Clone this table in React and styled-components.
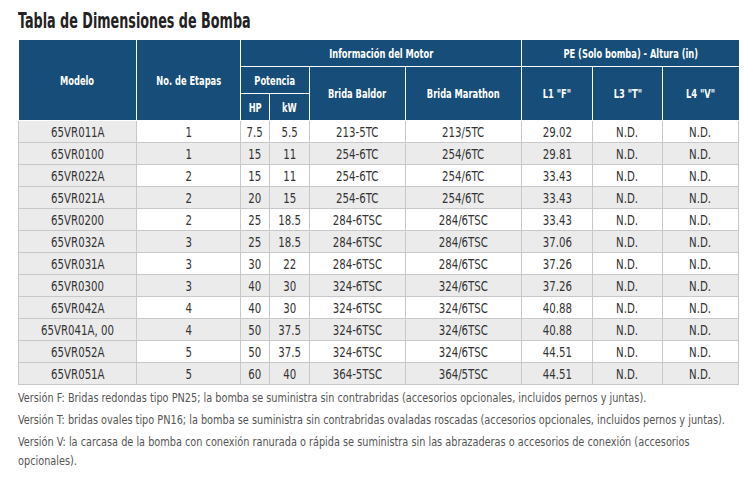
import React from 'react';
import styled, { createGlobalStyle } from 'styled-components';

const GlobalStyle = createGlobalStyle`
  html, body {
    margin: 0;
    padding: 0;
    background: #ffffff;
  }
  body {
    font-family: 'DejaVu Sans Condensed', 'DejaVu Sans', sans-serif;
  }
`;

const rows = [
  ['65VR011A', '1', '7.5', '5.5', '213-5TC', '213/5TC', '29.02', 'N.D.', 'N.D.'],
  ['65VR0100', '1', '15', '11', '254-6TC', '254/6TC', '29.81', 'N.D.', 'N.D.'],
  ['65VR022A', '2', '15', '11', '254-6TC', '254/6TC', '33.43', 'N.D.', 'N.D.'],
  ['65VR021A', '2', '20', '15', '254-6TC', '254/6TC', '33.43', 'N.D.', 'N.D.'],
  ['65VR0200', '2', '25', '18.5', '284-6TSC', '284/6TSC', '33.43', 'N.D.', 'N.D.'],
  ['65VR032A', '3', '25', '18.5', '284-6TSC', '284/6TSC', '37.06', 'N.D.', 'N.D.'],
  ['65VR031A', '3', '30', '22', '284-6TSC', '284/6TSC', '37.26', 'N.D.', 'N.D.'],
  ['65VR0300', '3', '40', '30', '324-6TSC', '324/6TSC', '37.26', 'N.D.', 'N.D.'],
  ['65VR042A', '4', '40', '30', '324-6TSC', '324/6TSC', '40.88', 'N.D.', 'N.D.'],
  ['65VR041A, 00', '4', '50', '37.5', '324-6TSC', '324/6TSC', '40.88', 'N.D.', 'N.D.'],
  ['65VR052A', '5', '50', '37.5', '324-6TSC', '324/6TSC', '44.51', 'N.D.', 'N.D.'],
  ['65VR051A', '5', '60', '40', '364-5TSC', '364/5TSC', '44.51', 'N.D.', 'N.D.'],
];

const colWidths = [118, 104, 29, 40, 96, 116, 71, 70, 76];

const notes = [
  'Versión F: Bridas redondas tipo PN25; la bomba se suministra sin contrabridas (accesorios opcionales, incluidos pernos y juntas).',
  'Versión T: bridas ovales tipo PN16; la bomba se suministra sin contrabridas ovaladas roscadas (accesorios opcionales, incluidos pernos y juntas).',
  'Versión V: la carcasa de la bomba con conexión ranurada o rápida se suministra sin las abrazaderas o accesorios de conexión (accesorios opcionales).',
];

// the source font is a narrow grotesque, so text gets squeezed horizontally
const NOTE_SX = 0.865;

const Page = styled.div`
  padding: 8px 15px 0 18px;
  width: 753px;
  box-sizing: border-box;
`;

const Title = styled.h1`
  margin: 0 0 6px;
  font-size: 22px;
  line-height: 26px;
  font-weight: 700;
  color: #222222;
  white-space: nowrap;
  transform: scaleX(0.645);
  transform-origin: left center;
`;

const Table = styled.table`
  border-collapse: collapse;
  table-layout: fixed;
  width: 720px;
`;

const Squeeze = styled.span`
  display: inline-block;
  white-space: nowrap;
  transform: scaleX(${(p) => p.$sx});
  transform-origin: center;
`;

const HeadCell = styled.th`
  background: #174e79;
  color: #ffffff;
  font-size: 13px;
  font-weight: 700;
  height: 26px;
  padding: 0;
  text-align: center;
  border: 1px solid #ffffff;
  border-top: none;
  &:first-child { border-left: none; }
  &:last-child { border-right: none; }
`;

const BodyRow = styled.tr`
  height: 22px;
`;

const Cell = styled.td`
  padding: 0;
  height: 21px;
  text-align: center;
  font-size: 13.5px;
  color: #333333;
  border: 1px solid #c8c8c8;
  background: ${(p) => (p.$shade ? '#ebebeb' : '#ffffff')};
`;

const Notes = styled.div`
  margin-top: 3px;
  width: 720px;
  display: flex;
  flex-direction: column;
  gap: 3px;
`;

const Note = styled.p`
  margin: 0;
  width: ${720 / NOTE_SX}px;
  font-size: 12.5px;
  line-height: 19px;
  color: #555555;
  transform: scaleX(${NOTE_SX});
  transform-origin: left top;
`;

const H = ({ children, ...rest }) => (
  <HeadCell {...rest}>
    <Squeeze $sx={0.71}>{children}</Squeeze>
  </HeadCell>
);

export default function App() {
  return (
    <Page>
      <GlobalStyle />
      <Title>Tabla de Dimensiones de Bomba</Title>
      <Table>
        <colgroup>
          {colWidths.map((w, i) => (
            <col key={i} style={{ width: w }} />
          ))}
        </colgroup>
        <thead>
          <tr>
            <H rowSpan={3}>Modelo</H>
            <H rowSpan={3}>No. de Etapas</H>
            <H colSpan={4}>Información del Motor</H>
            <H colSpan={3}>PE (Solo bomba) - Altura (in)</H>
          </tr>
          <tr>
            <H colSpan={2}>Potencia</H>
            <H rowSpan={2}>Brida Baldor</H>
            <H rowSpan={2}>Brida Marathon</H>
            <H rowSpan={2}>L1 "F"</H>
            <H rowSpan={2}>L3 "T"</H>
            <H rowSpan={2}>L4 "V"</H>
          </tr>
          <tr>
            <H>HP</H>
            <H>kW</H>
          </tr>
        </thead>
        <tbody>
          {rows.map((r, i) => (
            <BodyRow key={i}>
              {r.map((v, j) => (
                <Cell key={j} $shade={j === 0 || i % 2 === 1}>
                  <Squeeze $sx={0.84}>{v}</Squeeze>
                </Cell>
              ))}
            </BodyRow>
          ))}
        </tbody>
      </Table>
      <Notes>
        {notes.map((n, i) => (
          <Note key={i}>{n}</Note>
        ))}
      </Notes>
    </Page>
  );
}
